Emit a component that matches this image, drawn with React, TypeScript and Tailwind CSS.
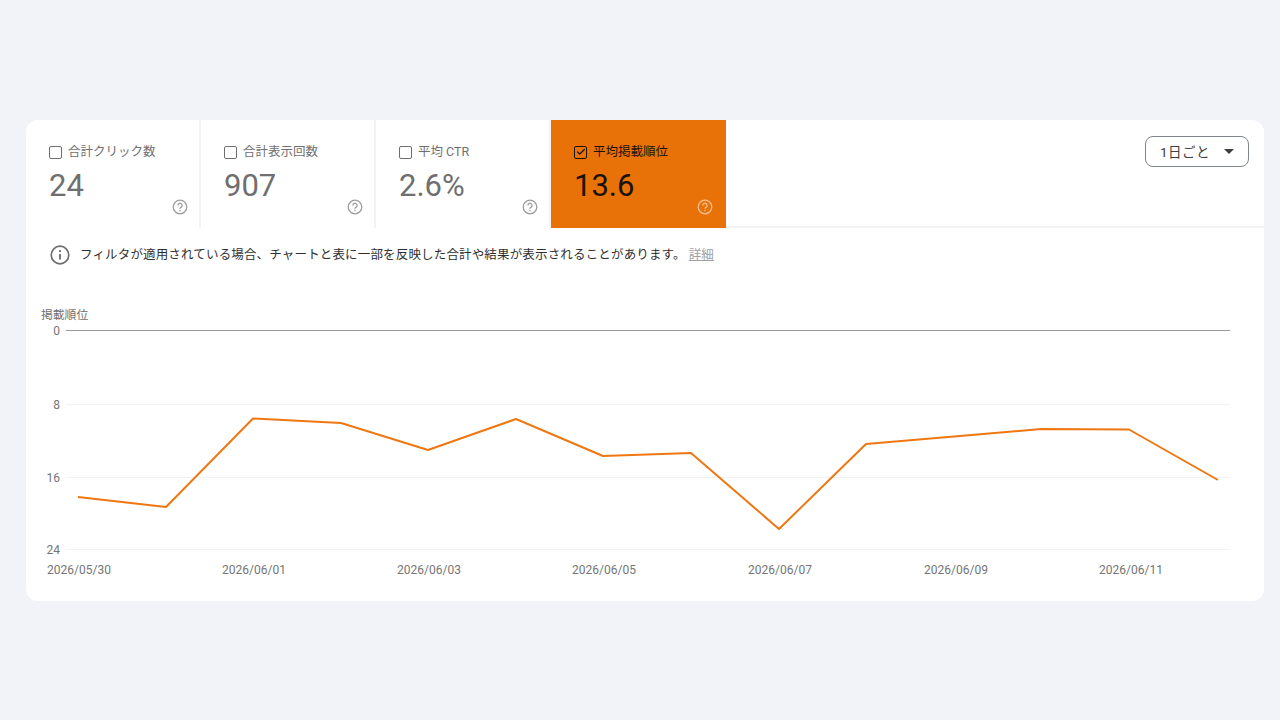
import { Check } from "lucide-react"

const font = "font-['Roboto','Noto_Sans_CJK_JP',sans-serif]"

const metrics = [
  { label: "合計クリック数", value: "24", active: false },
  { label: "合計表示回数", value: "907", active: false },
  { label: "平均 CTR", value: "2.6%", active: false },
  { label: "平均掲載順位", value: "13.6", active: true },
]

const points = "78,497 166,507 253,418.5 341,423 428,450 516,419 603,456 691,453 779,529 866,444 954,436.5 1041,429 1129,429.5 1218,480"

const dates = [
  { x: 79, label: "2026/05/30" },
  { x: 254, label: "2026/06/01" },
  { x: 429, label: "2026/06/03" },
  { x: 604, label: "2026/06/05" },
  { x: 780, label: "2026/06/07" },
  { x: 956, label: "2026/06/09" },
  { x: 1131, label: "2026/06/11" },
]

const ticks = [
  { y: 330.5, labelY: 335, label: "0", color: "#9a9a9a" },
  { y: 404.5, labelY: 409, label: "8", color: "#f1f3f4" },
  { y: 477.5, labelY: 482, label: "16", color: "#f1f3f4" },
  { y: 549.5, labelY: 554, label: "24", color: "#f1f3f4" },
]

function HelpIcon({ className }: { className: string }) {
  return (
    <svg viewBox="0 0 16 16" className={className} fill="none" stroke="currentColor">
      <circle cx="8" cy="8" r="6.8" strokeWidth="1.3" />
      <path d="M5.9 6.4a2.1 2.1 0 1 1 3.3 1.7c-.8.5-1.2.9-1.2 1.7" strokeWidth="1.3" />
      <circle cx="8" cy="11.6" r=".8" fill="currentColor" stroke="none" />
    </svg>
  )
}

function MetricTab({ label, value, active }: { label: string; value: string; active: boolean }) {
  return (
    <div
      className={`relative h-[108px] w-[175px] pl-[23px] pt-[23px] border-r-2 last:border-r-0 ${
        active ? "bg-[#e87108] border-[#e87108] text-[#1b1206]" : "bg-white border-[#f1f3f4] text-[#6f6f6f]"
      }`}
    >
      <div className="flex items-center gap-[6px] h-[18px]">
        <span
          className={`flex items-center justify-center w-[13px] h-[13px] rounded-[2px] border ${
            active ? "border-[#1b1206]" : "border-[#6f6f6f]"
          }`}
        >
          {active && <Check className="w-[10px] h-[10px]" strokeWidth={3} />}
        </span>
        <span className="text-[12.5px] leading-[18px]">{label}</span>
      </div>
      <div className="mt-[6px] text-[31px] leading-[38px]">{value}</div>
      <HelpIcon
        className={`absolute bottom-[13px] w-[16px] h-[16px] ${active ? "right-[13px] text-[#f6c08f]" : "right-[11px] text-[#9e9e9e]"}`}
      />
    </div>
  )
}

export default function App() {
  return (
    <div className={`min-h-[720px] bg-[#f1f3f8] pl-[26px] pr-[16px] pt-[120px] ${font}`}>
      <div className="h-[481px] rounded-[12px] bg-white overflow-hidden">
        <div className="flex justify-between border-b-2 border-[#f1f3f4] h-[108px]">
          <div className="flex">
            {metrics.map((m) => (
              <MetricTab key={m.label} {...m} />
            ))}
          </div>
          <div className="pt-[16px] pr-[15px]">
            <button className="flex items-center justify-between w-[104px] h-[31px] pl-[14px] pr-[14px] rounded-[8px] border border-[#80868b] text-[13.5px] text-[#3c4043] tracking-[0.5px]">
              <span className="mt-[1px]">1日ごと</span>
              <span className="w-0 h-0 border-x-[5px] border-x-transparent border-t-[5px] border-t-[#3c4043]" />
            </button>
          </div>
        </div>

        <div className="flex items-center h-[54px] pl-[24px] text-[12.5px] text-[#2f2f2f] tracking-[0.16px]">
          <svg viewBox="0 0 20 20" className="w-[20px] h-[20px] text-[#6f6f6f]" fill="none" stroke="currentColor">
            <circle cx="10" cy="10" r="8.8" strokeWidth="1.7" />
            <path d="M10 9v5.5" strokeWidth="1.9" />
            <circle cx="10" cy="6.2" r="1.1" fill="currentColor" stroke="none" />
          </svg>
          <span className="ml-[10px]">フィルタが適用されている場合、チャートと表に一部を反映した合計や結果が表示されることがあります。</span>
          <span className="ml-[3px] text-[#a0a0a0] underline">詳細</span>
        </div>

        {/* chart uses page coordinates in its viewBox */}
        <svg viewBox="26 300 1238 301" className="block w-[1238px] h-[301px] mt-[18px]">
          <text x="41" y="319" fontSize="11.8" fill="#6f6f6f">掲載順位</text>
          {ticks.map((t) => (
            <g key={t.label}>
              <line x1="66" x2="1230" y1={t.y} y2={t.y} stroke={t.color} strokeWidth="1" />
              <text x="60" y={t.labelY} fontSize="12" fill="#757575" textAnchor="end">{t.label}</text>
            </g>
          ))}
          <polyline points={points} fill="none" stroke="#ee7711" strokeWidth="2" strokeLinejoin="round" />
          {dates.map((d) => (
            <text key={d.label} x={d.x} y="574" fontSize="12" fill="#757575" textAnchor="middle">{d.label}</text>
          ))}
        </svg>
      </div>
    </div>
  )
}
